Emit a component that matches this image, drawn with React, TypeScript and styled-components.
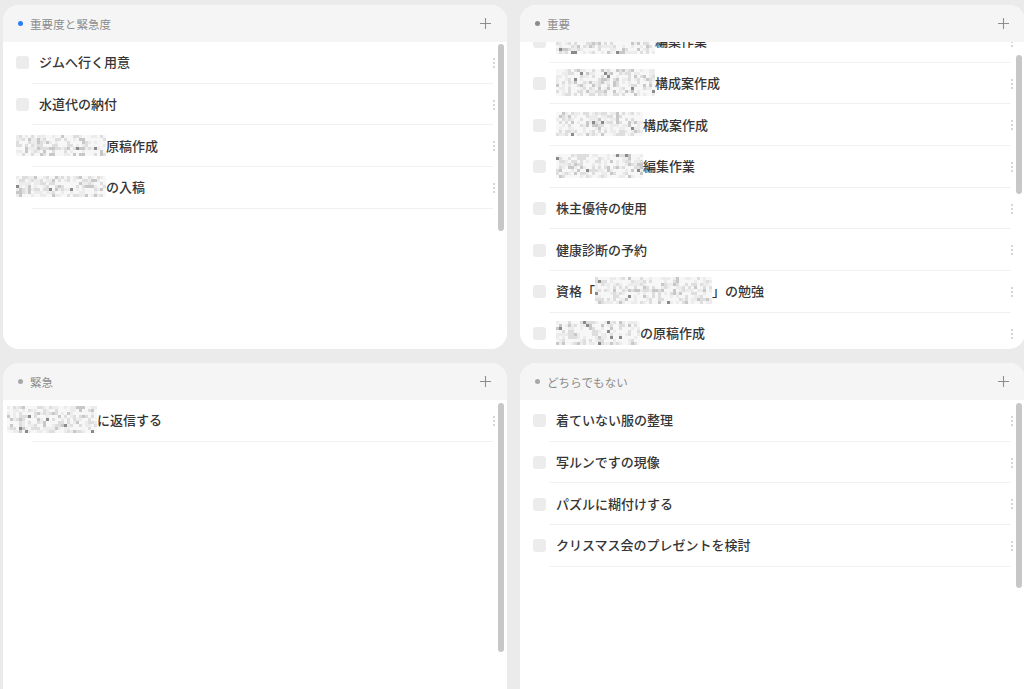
import React from "react";
import styled, { createGlobalStyle } from "styled-components";

const Global = createGlobalStyle`
  html, body { margin: 0; padding: 0; background: #ebebeb; overflow: hidden; }
  body { font-family: "Noto Sans CJK JP", "Noto Sans", sans-serif; }
  * { box-sizing: border-box; }
`;

const Board = styled.div`
  display: grid;
  grid-template-columns: 504px 505px;
  grid-template-rows: 344px 360px;
  column-gap: 13px;
  row-gap: 14px;
  padding: 5px 0 0 3px;
  width: 1040px;
  height: 689px;
  overflow: hidden;
`;

const Panel = styled.section`
  background: #ffffff;
  border-radius: 16px;
  overflow: hidden;
  display: flex;
  flex-direction: column;
  min-height: 0;
`;

const Header = styled.header`
  height: 37px;
  flex: 0 0 37px;
  background: #f5f5f5;
  display: flex;
  align-items: center;
  padding: 0 15px 0 15px;
  position: relative;
  z-index: 2;
`;

const Dot = styled.span<{ $color: string }>`
  width: 5px;
  height: 5px;
  border-radius: 50%;
  background: ${(p) => p.$color};
  margin-right: 7px;
`;

const Title = styled.span`
  font-size: 11.5px;
  color: #8c8c8c;
  letter-spacing: 0.1px;
  flex: 1;
`;

const PlusIcon = () => (
  <svg width="13" height="13" viewBox="0 0 13 13">
    <path d="M6.5 1v11M1 6.5h11" stroke="#8e8e8e" strokeWidth="1.1" fill="none" />
  </svg>
);

const Body = styled.div`
  position: relative;
  flex: 1;
  overflow: hidden;
`;

const List = styled.div<{ $offset: number }>`
  display: flex;
  flex-direction: column;
  margin-top: ${(p) => p.$offset}px;
`;

const Row = styled.div`
  height: 41.7px;
  flex: 0 0 41.7px;
  display: flex;
  align-items: center;
  padding: 0 0 2px 13px;
  position: relative;
  &::after {
    content: "";
    position: absolute;
    left: 29px;
    right: 14px;
    bottom: 0;
    height: 1px;
    background: #f1f1f1;
  }
`;

const Check = styled.span`
  width: 13px;
  height: 13px;
  border-radius: 3px;
  background: #ececec;
  flex: 0 0 13px;
  margin: 2px 10px 0 0;
`;

const Label = styled.span`
  font-size: 13px;
  font-weight: 500;
  color: #353535;
  white-space: nowrap;
  display: flex;
  align-items: center;
`;

const MoreWrap = styled.span`
  position: absolute;
  right: 12px;
  top: 50%;
  transform: translateY(-50%);
  display: flex;
  flex-direction: column;
  gap: 2px;
`;

const MoreDot = styled.span`
  width: 2px;
  height: 2px;
  border-radius: 50%;
  background: #c9c9c9;
`;

const More = () => (
  <MoreWrap>
    <MoreDot />
    <MoreDot />
    <MoreDot />
  </MoreWrap>
);

const Scrollbar = styled.div<{ $top: number; $height: number }>`
  position: absolute;
  right: 3px;
  top: ${(p) => p.$top}px;
  height: ${(p) => p.$height}px;
  width: 6px;
  border-radius: 3px;
  background: #c7c7c7;
`;

const MosaicBox = styled.span<{ $shift: number }>`
  display: inline-flex;
  margin-left: ${(p) => p.$shift}px;
`;

function rand(seed: number) {
  let s = seed;
  return () => {
    s = (s * 9301 + 49297) % 233280;
    return s / 233280;
  };
}

const Mosaic = ({ w, h = 24, seed = 1, shift = 0 }: { w: number; h?: number; seed?: number; shift?: number }) => {
  const r = rand(seed);
  const cell = 3;
  const cols = Math.floor(w / cell);
  const rows = Math.floor(h / cell);
  const cells: React.ReactNode[] = [];
  for (let y = 0; y < rows; y++) {
    for (let x = 0; x < cols; x++) {
      const v = r();
      let fill: string | null = null;
      if (v < 0.015) fill = "#8a8a8a";
      else if (v < 0.1) fill = "#c8c8c8";
      else if (v < 0.3) fill = "#dedede";
      else if (v < 0.55) fill = "#ececec";
      if (fill) cells.push(<rect key={`${x}-${y}`} x={x * cell} y={y * cell} width={cell} height={cell} fill={fill} />);
    }
  }
  return (
    <MosaicBox $shift={shift}>
      <svg width={cols * cell} height={rows * cell}>
        <rect width={cols * cell} height={rows * cell} fill="#f7f7f7" />
        {cells}
      </svg>
    </MosaicBox>
  );
};

type Item = { check?: boolean; content: React.ReactNode };

const Quadrant = ({
  title,
  dot,
  items,
  offset = 0,
  bar,
}: {
  title: string;
  dot: string;
  items: Item[];
  offset?: number;
  bar: [number, number];
}) => (
  <Panel>
    <Header>
      <Dot $color={dot} />
      <Title>{title}</Title>
      <PlusIcon />
    </Header>
    <Body>
      <List $offset={offset}>
        {items.map((it, i) => (
          <Row key={i}>
            {it.check !== false && <Check />}
            <Label>{it.content}</Label>
            <More />
          </Row>
        ))}
      </List>
      <Scrollbar $top={bar[0]} $height={bar[1]} />
    </Body>
  </Panel>
);

export default function App() {
  return (
    <>
      <Global />
      <Board>
        <Quadrant
          title="重要度と緊急度"
          dot="#2b7ff5"
          bar={[2, 187]}
          items={[
            { content: "ジムへ行く用意" },
            { content: "水道代の納付" },
            { check: false, content: <><Mosaic w={90} h={21} seed={3} shift={0} />原稿作成</> },
            { check: false, content: <><Mosaic w={90} h={21} seed={7} shift={0} />の入稿</> },
          ]}
        />
        <Quadrant
          title="重要"
          dot="#8c8c8c"
          offset={-21}
          bar={[13, 139]}
          items={[
            { content: <><Mosaic w={99} h={27} seed={11} />編案作業</> },
            { content: <><Mosaic w={99} h={27} seed={13} />構成案作成</> },
            { content: <><Mosaic w={87} h={24} seed={17} />構成案作成</> },
            { content: <><Mosaic w={87} h={24} seed={19} />編集作業</> },
            { content: "株主優待の使用" },
            { content: "健康診断の予約" },
            { content: <>資格「<Mosaic w={117} h={27} seed={23} />」の勉強</> },
            { content: <><Mosaic w={84} h={24} seed={29} />の原稿作成</> },
          ]}
        />
        <Quadrant
          title="緊急"
          dot="#a8a8a8"
          bar={[3, 249]}
          items={[{ check: false, content: <><Mosaic w={90} h={27} seed={31} shift={-9} />に返信する</> }]}
        />
        <Quadrant
          title="どちらでもない"
          dot="#a8a8a8"
          bar={[3, 185]}
          items={[
            { content: "着ていない服の整理" },
            { content: "写ルンですの現像" },
            { content: "パズルに糊付けする" },
            { content: "クリスマス会のプレゼントを検討" },
          ]}
        />
      </Board>
    </>
  );
}
